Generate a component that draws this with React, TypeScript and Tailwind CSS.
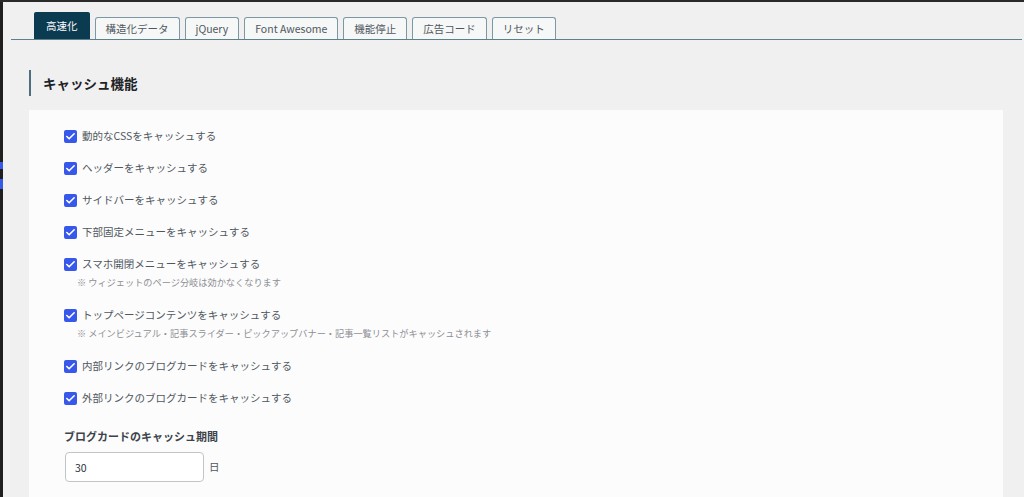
import { Check } from 'lucide-react';

const tabs = ['高速化', '構造化データ', 'jQuery', 'Font Awesome', '機能停止', '広告コード', 'リセット'];

const items = [
  { label: '動的なCSSをキャッシュする' },
  { label: 'ヘッダーをキャッシュする' },
  { label: 'サイドバーをキャッシュする' },
  { label: '下部固定メニューをキャッシュする' },
  { label: 'スマホ開閉メニューをキャッシュする', note: '※ ウィジェットのページ分岐は効かなくなります' },
  {
    label: 'トップページコンテンツをキャッシュする',
    note: '※ メインビジュアル・記事スライダー・ピックアップバナー・記事一覧リストがキャッシュされます',
  },
  { label: '内部リンクのブログカードをキャッシュする' },
  { label: '外部リンクのブログカードをキャッシュする' },
];

export default function App() {
  return (
    <div
      className="w-[1024px] h-[497px] overflow-hidden bg-[#f0f0f0] flex border-t-2 border-[#2a2a2a]"
      style={{ fontFamily: '"Noto Sans CJK JP", "Noto Sans", sans-serif' }}
    >
      {/* admin frame edge */}
      <div className="w-[3px] shrink-0 bg-[#1f1f1f] flex flex-col">
        <div className="h-[160px]" />
        <div className="h-[7px] bg-[#3858e9]" />
        <div className="h-[10px]" />
        <div className="h-[10px] bg-[#3858e9]" />
      </div>

      <div className="flex-1 pl-[8px] pr-[2px]">
        {/* tabs */}
        <div className="h-[38px] flex items-end gap-[5px] pl-[23px] border-b border-[#5f7f8c]">
          {tabs.map((t, i) =>
            i === 0 ? (
              <div
                key={t}
                className="h-[27px] px-[12px] flex items-center bg-[#0b3b50] text-white text-[10.5px] rounded-t-[2px]"
              >
                {t}
              </div>
            ) : (
              <div
                key={t}
                className="h-[22px] px-[10px] flex items-center bg-[#f6f7f7] text-[#50575e] text-[10.5px] border border-b-0 border-[#7d98a3] rounded-t-[3px]"
              >
                {t}
              </div>
            )
          )}
        </div>

        {/* heading */}
        <div className="ml-[18px] mt-[30px] h-[26px] border-l-2 border-[#4d6e7c] pl-[12px] flex items-center">
          <h2 className="text-[13.5px] font-bold text-[#1d2327]">キャッシュ機能</h2>
        </div>

        {/* panel */}
        <div className="ml-[18px] mt-[14px] w-[974px] h-[400px] bg-[#fcfcfc] pt-[10px] pl-[35px]">
          {items.map((it) => (
            <div key={it.label} className="py-[9px]">
              <div className="flex items-center h-[14px]">
                <span className="w-[13px] h-[13px] rounded-[2px] bg-[#3858e9] flex items-center justify-center">
                  <Check className="w-[11px] h-[11px] text-white" strokeWidth={3.5} />
                </span>
                <span className="ml-[5px] text-[10.5px] text-[#50575e] leading-[14px]">{it.label}</span>
              </div>
              {it.note && (
                <div className="mt-[3px] pl-[13px] h-[16px] text-[9.2px] leading-[16px] text-[#8c8f94]">{it.note}</div>
              )}
            </div>
          ))}

          <div className="mt-[14px] h-[16px] text-[11px] font-bold text-[#3c434a] leading-[16px]">
            ブログカードのキャッシュ期間
          </div>
          <div className="mt-[8px] flex items-center">
            <input
              readOnly
              value="30"
              className="ml-[1px] w-[139px] h-[30px] rounded-[4px] border border-[#c3c4c7] bg-white px-[9px] text-[10.5px] text-[#2c3338] outline-none"
            />
            <span className="ml-[5px] text-[10.5px] text-[#50575e]">日</span>
          </div>
        </div>
      </div>
    </div>
  );
}
